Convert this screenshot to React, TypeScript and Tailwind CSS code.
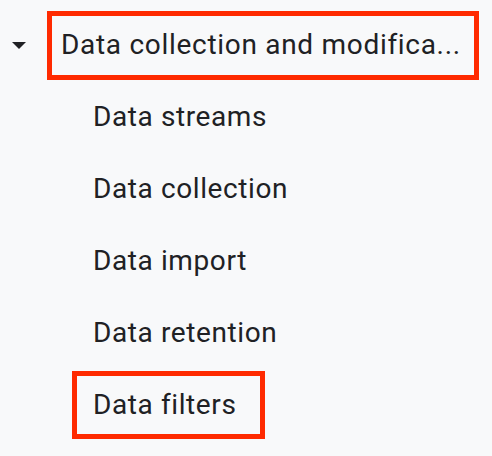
import React from "react";

const items = ["Data streams", "Data collection", "Data import", "Data retention"];

export default function App() {
  return (
    <div className="w-[492px] h-[456px] bg-[#f8f9fa] overflow-hidden text-[#202124]" style={{ fontFamily: "Roboto, 'Liberation Sans', sans-serif" }}>
      <div className="pt-[9px]">
        <div className="h-[72px] flex items-center">
          <div className="w-[47px] flex justify-center pl-[1px]">
            <svg width="14" height="7" viewBox="0 0 14 7" className="ml-[-11px]">
              <path d="M0 0 L14 0 L7 7 Z" fill="#202124" />
            </svg>
          </div>
          <div className="w-[432px] h-[69px] border-[5px] border-[#ff2a00] flex items-center pl-[9px]">
            <span className="text-[28px] leading-none tracking-[0.7px] whitespace-nowrap">Data collection and modifica...</span>
          </div>
        </div>
        {items.map((t) => (
          <div key={t} className="h-[72px] flex items-center pl-[93px]">
            <span className="text-[28px] leading-none tracking-[0.6px]">{t}</span>
          </div>
        ))}
        <div className="h-[72px] flex items-center pl-[72px]">
          <div className="w-[193px] h-[68px] border-[5px] border-[#ff2a00] flex items-center pl-[16px]">
            <span className="text-[28px] leading-none tracking-[0.6px]">Data filters</span>
          </div>
        </div>
      </div>
    </div>
  );
}
